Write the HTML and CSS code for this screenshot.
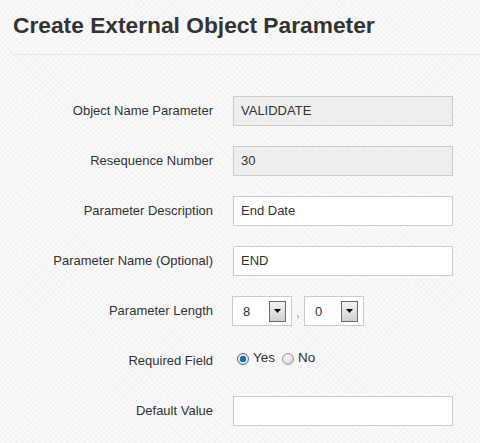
FILE: index.html
```html
<!DOCTYPE html>
<html>
<head>
<meta charset="utf-8">
<link rel="stylesheet" href="styles.css">
</head>
<body>
<div class="page">
  <h1 class="title">Create External Object Parameter</h1>
  <div class="rule"></div>
  <form class="form">
    <div class="row">
      <label class="label">Object Name Parameter</label>
      <div class="input readonly">VALIDDATE</div>
    </div>
    <div class="row">
      <label class="label">Resequence Number</label>
      <div class="input readonly">30</div>
    </div>
    <div class="row">
      <label class="label">Parameter Description</label>
      <div class="input">End Date</div>
    </div>
    <div class="row">
      <label class="label">Parameter Name (Optional)</label>
      <div class="input">END</div>
    </div>
    <div class="row">
      <label class="label">Parameter Length</label>
      <div class="selects">
        <div class="select"><span class="sel-val">8</span><span class="sel-btn"><svg width="7" height="4" viewBox="0 0 7 4"><path d="M0 0H7L3.5 4Z" fill="#000"/></svg></span></div>
        <span class="comma">,</span>
        <div class="select"><span class="sel-val">0</span><span class="sel-btn"><svg width="7" height="4" viewBox="0 0 7 4"><path d="M0 0H7L3.5 4Z" fill="#000"/></svg></span></div>
      </div>
    </div>
    <div class="row">
      <label class="label">Required Field</label>
      <div class="radios">
        <span class="radio on"></span><span class="rtext">Yes</span>
        <span class="radio"></span><span class="rtext">No</span>
      </div>
    </div>
    <div class="row">
      <label class="label">Default Value</label>
      <div class="input"></div>
    </div>
  </form>
</div>
</body>
</html>
```
FILE: styles.css
```css
html, body {
  margin: 0;
  padding: 0;
}
body {
  width: 480px;
  height: 443px;
  overflow: hidden;
  background-color: #f9f9f9;
  background-image:
    repeating-linear-gradient(45deg, rgba(0,0,0,0.018) 0 1px, transparent 1px 4px),
    repeating-linear-gradient(-45deg, rgba(0,0,0,0.018) 0 1px, transparent 1px 4px);
  font-family: "Liberation Sans", Arial, sans-serif;
  color: #333;
}
.page {
  padding: 11px 0 0 13px;
}
.title {
  margin: 0;
  font-size: 22.75px;
  line-height: 28px;
  font-weight: bold;
  color: #333;
}
.rule {
  margin-top: 15px;
  height: 1px;
  background: #e6e6e6;
}
.form {
  display: flex;
  flex-direction: column;
  gap: 20px;
  padding-top: 41px;
}
.row {
  display: flex;
  align-items: center;
  height: 30px;
}
.label {
  width: 220px;
  text-align: right;
  font-size: 13px;
  color: #333;
  padding-right: 20px;
  box-sizing: border-box;
  margin-top: -2px;
}
.input {
  width: 220px;
  height: 30px;
  box-sizing: border-box;
  border: 1px solid #ccc;
  background: #fff;
  font-size: 13px;
  line-height: 28px;
  padding-left: 7px;
  color: #333;
}
.input.readonly {
  background: #eee;
}
.selects {
  display: flex;
  align-items: center;
  margin-left: -1px;
}
.select {
  width: 60px;
  height: 30px;
  box-sizing: border-box;
  border: 1px solid #ccc;
  background: #fff;
  display: flex;
  align-items: center;
  padding-left: 10px;
  font-size: 13px;
  color: #333;
}
.sel-val {
  width: 26px;
}
.sel-btn {
  width: 17px;
  height: 21px;
  box-sizing: border-box;
  border: 1px solid #6a6a6a;
  background: linear-gradient(#f4f4f4, #d0d0d0);
  display: flex;
  align-items: center;
  justify-content: center;
}
.comma {
  width: 12px;
  text-align: center;
  font-size: 12px;
  color: #888;
  margin-top: 4px;
}
.radios {
  display: flex;
  align-items: center;
  font-size: 13.5px;
  margin-top: -7px;
  padding-left: 4px;
}
.radio {
  width: 12px;
  height: 12px;
  border-radius: 50%;
  box-sizing: border-box;
  border: 1px solid #9a9a9a;
  background: radial-gradient(circle at 40% 35%, #fff, #c8c8c8);
  margin-right: 4px;
  margin-top: 3px;
}
.radio.on {
  border-color: #4b6c85;
  background: radial-gradient(circle, #1b6ea0 0 3px, #dde6ee 3.5px);
}
.rtext {
  margin-right: 7px;
}
```
